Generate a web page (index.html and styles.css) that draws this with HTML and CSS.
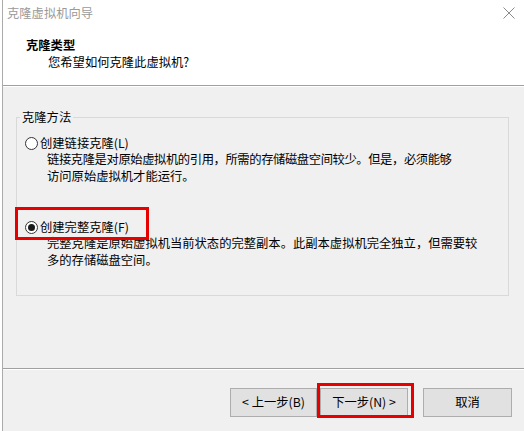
FILE: index.html
```html
<!DOCTYPE html>
<html lang="zh-CN">
<head>
<meta charset="utf-8">
<title>克隆虚拟机向导</title>
<link rel="stylesheet" href="styles.css">
</head>
<body>
<div class="window">
  <div class="titlebar">
    <span class="title">克隆虚拟机向导</span>
    <svg class="close" width="12" height="12" viewBox="0 0 12 12"><path d="M0.5 0.5 L11.5 11.5 M11.5 0.5 L0.5 11.5" stroke="#8a8a8a" stroke-width="1" fill="none"/></svg>
  </div>
  <div class="header">
    <div class="h-title">克隆类型</div>
    <div class="h-sub">您希望如何克隆此虚拟机?</div>
  </div>
  <div class="body">
    <fieldset class="group">
      <legend class="group-label">克隆方法</legend>
      <div class="option option-1">
        <div class="radio-row"><span class="radio"></span><span class="radio-text">创建链接克隆(L)</span></div>
        <div class="desc"><span class="tight">链接克隆是对原始虚拟机的引用，所需的存储磁盘空间较少。但是，必须能够</span><br>访问原始虚拟机才能运行。</div>
      </div>
      <div class="option option-2">
        <div class="radio-row"><span class="radio checked"></span><span class="radio-text">创建完整克隆(F)</span><span class="mark mark-radio"></span></div>
        <div class="desc">完整克隆是原始虚拟机当前状态的完整副本。此副本虚拟机完全独立，但需要较<br>多的存储磁盘空间。</div>
      </div>
    </fieldset>
  </div>
  <div class="footer">
    <button class="btn btn-back">&lt; 上一步(B)</button>
    <div class="btn-wrap"><button class="btn btn-next">下一步(N) &gt;</button><span class="mark mark-btn"></span></div>
    <button class="btn btn-cancel">取消</button>
  </div>
</div>
</body>
</html>
```
FILE: styles.css
```css
html, body {
  margin: 0;
  padding: 0;
}
body {
  width: 524px;
  height: 431px;
  overflow: hidden;
  background: #ffffff;
  font-family: "Noto Sans CJK SC", "Noto Sans", sans-serif;
  font-size: 12.3px;
  color: #000000;
}
.window {
  margin-left: 2px;
  border-left: 1px solid #ababab;
  height: 431px;
  box-sizing: border-box;
  display: flex;
  flex-direction: column;
}
.titlebar {
  height: 26px;
  flex: none;
  display: flex;
  align-items: center;
  justify-content: space-between;
  padding: 0 9px 0 4px;
  background: #ffffff;
  color: #9a9a9a;
  line-height: 26px;
}
.close {
  display: block;
}
.header {
  flex: none;
  height: 60px;
  box-sizing: border-box;
  background: #ffffff;
  padding: 10.5px 0 0 23px;
  line-height: 17px;
  border-bottom: 1px solid #a0a0a0;
}
.h-title {
  font-weight: bold;
}
.h-sub {
  padding-left: 22px;
}
.body {
  flex: 1;
  background: #f0f0f0;
  border-top: 1px solid #ffffff;
  display: flex;
  flex-direction: column;
}
.group {
  margin: 21.5px 15px 0 13px;
  padding: 0 8px;
  border: 1px solid #d9d9d9;
  box-sizing: border-box;
  height: 187.5px;
  min-width: 0;
}
.group-label {
  margin-left: -5px;
  padding: 0 2px;
  line-height: 17px;
}
.option-1 {
  margin-top: 9.25px;
}
.option-2 {
  margin-top: 34.5px;
}
.radio-row {
  position: relative;
  display: flex;
  align-items: center;
  height: 16.5px;
  line-height: 16.5px;
}
.radio {
  width: 13px;
  height: 13px;
  box-sizing: border-box;
  border: 1px solid #333333;
  border-radius: 50%;
  background: #ffffff;
  margin-right: 2px;
  display: flex;
  align-items: center;
  justify-content: center;
}
.radio.checked::after {
  content: "";
  width: 7px;
  height: 7px;
  border-radius: 50%;
  background: #1a1a1a;
}
.desc {
  padding-left: 22px;
  line-height: 16.5px;
  white-space: nowrap;
}
.tight {
  letter-spacing: -0.4px;
}
.mark {
  position: absolute;
  box-sizing: border-box;
  border: 3px solid #e60000;
  pointer-events: none;
}
.mark-radio {
  left: -10px;
  top: -11.75px;
  width: 134px;
  height: 33px;
}
.footer {
  flex: none;
  height: 63px;
  box-sizing: border-box;
  border-top: 1px solid #a0a0a0;
  box-shadow: inset 0 1px 0 #ffffff;
  background: #f0f0f0;
  display: flex;
  align-items: flex-start;
  justify-content: flex-end;
  padding: 19px 12px 0 0;
}
.btn {
  height: 29px;
  box-sizing: border-box;
  margin: 0;
  padding: 0;
  background: #e1e1e1;
  border: 1px solid #adadad;
  border-radius: 0;
  font: inherit;
  color: #000000;
  line-height: 27px;
}
.btn-back {
  width: 87px;
}
.btn-wrap {
  position: relative;
  margin-left: 3px;
}
.btn-next {
  width: 88px;
  display: block;
}
.mark-btn {
  left: -3px;
  top: -5px;
  width: 97px;
  height: 35px;
}
.btn-cancel {
  width: 89px;
  margin-left: 15px;
}
```
